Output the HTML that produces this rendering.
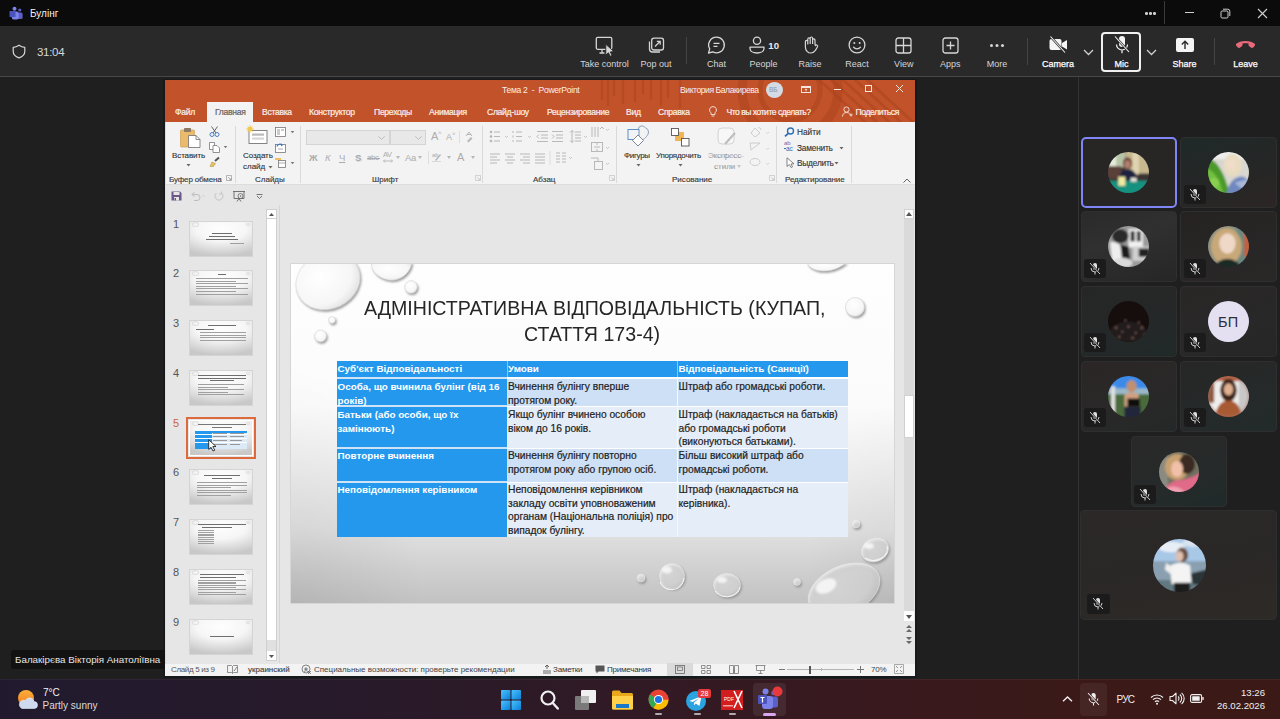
<!DOCTYPE html>
<html><head><meta charset="utf-8">
<style>
*{margin:0;padding:0;box-sizing:border-box}
html,body{width:1280px;height:719px;overflow:hidden;background:#1f1f1f;font-family:"Liberation Sans",sans-serif}
.a{position:absolute}
svg{position:absolute;overflow:visible}
.t{position:absolute;white-space:nowrap;line-height:1}
.lbl{position:absolute;top:59px;font-size:9px;line-height:11px;color:#d6d6d6;text-align:center;width:80px;margin-left:-40px;white-space:nowrap}
.lblb{color:#fff;-webkit-text-stroke:0.25px #fff}
/* ppt */
.tab{position:absolute;top:108px;font-size:8.6px;color:#fbefea;white-space:nowrap;line-height:9px;letter-spacing:-0.3px;-webkit-text-stroke:0.2px #fbefea}
.gl{position:absolute;top:175px;font-size:8px;color:#3a3a3a;white-space:nowrap;line-height:9px;-webkit-text-stroke:0.15px #3a3a3a}
.rl{position:absolute;font-size:8px;color:#333;white-space:nowrap;line-height:9px;-webkit-text-stroke:0.12px #333}
.gsep{position:absolute;top:126px;width:1px;height:57px;background:#dadada}
.snum{position:absolute;left:173px;font-size:11px;color:#555;line-height:11px}
.thumb{position:absolute;left:189px;width:64px;height:36px;border:1px solid #d4d4d4;background:radial-gradient(ellipse 90% 80% at 50% 20%,#fefefe 0%,#f6f6f6 45%,#d9d9d9 80%,#c8c8c8 100%);overflow:hidden}
.thumb i{position:absolute;display:block;height:1px;background:#9a9a9a;filter:blur(0.25px)}
</style></head><body>
<div class="a" style="left:0;top:0;width:1280px;height:26px;background:#0b0b0b"></div>
<div class="a" style="left:0;top:26px;width:1280px;height:50px;background:#292929"></div>
<div class="a" style="left:0;top:76px;width:1280px;height:1px;background:#474747"></div>
<div class="a" style="left:1078px;top:77px;width:1px;height:602px;background:#333"></div>
<!-- title bar -->
<svg class="a" style="left:9px;top:6px" width="15" height="15" viewBox="0 0 15 15">
<circle cx="5.5" cy="2.8" r="2" fill="#7b83eb"/><circle cx="10.8" cy="4" r="1.6" fill="#5b5fc7"/>
<rect x="8.6" y="6.4" width="5" height="6.5" rx="1.5" fill="#5b5fc7"/>
<rect x="2.8" y="5.6" width="7" height="8" rx="1.8" fill="#7b83eb"/>
<rect x="0.5" y="5" width="6" height="6" rx="0.6" fill="#4b53bc"/>
</svg>
<div class="t" style="left:30px;top:8.5px;font-size:10px;color:#f2f2f2">Булінг</div>
<div class="a" style="left:1145px;top:12px;width:2.5px;height:2.5px;border-radius:50%;background:#cfcfcf;box-shadow:4px 0 0 #cfcfcf,8px 0 0 #cfcfcf"></div>
<div class="a" style="left:1164px;top:1px;width:1px;height:23px;background:#3a3a3a"></div>
<div class="a" style="left:1185px;top:12px;width:9px;height:1px;background:#cfcfcf"></div>
<svg class="a" style="left:1220px;top:8px" width="11" height="11" viewBox="0 0 11 11"><rect x="1" y="3" width="7" height="7" rx="1.2" fill="none" stroke="#cfcfcf" stroke-width="1"/><path d="M3 1.2h4.8a2 2 0 0 1 2 2V8" fill="none" stroke="#cfcfcf" stroke-width="1"/></svg>
<svg class="a" style="left:1257px;top:8px" width="11" height="11" viewBox="0 0 11 11"><path d="M1 1L10 10M10 1L1 10" stroke="#d0d0d0" stroke-width="1.1"/></svg>

<!-- toolbar left -->
<svg class="a" style="left:12px;top:44px" width="14" height="15" viewBox="0 0 14 15"><path d="M7 1.2C5 2.6 3.2 3.2 1.2 3.3V7.3C1.2 10.6 3.4 12.7 7 13.9C10.6 12.7 12.8 10.6 12.8 7.3V3.3C10.8 3.2 9 2.6 7 1.2Z" fill="none" stroke="#d8d8d8" stroke-width="1.2" stroke-linejoin="round"/></svg>
<div class="t" style="left:37px;top:47px;font-size:11.5px;color:#d8d8d8;letter-spacing:-0.3px">31:04</div>

<!-- toolbar items -->
<svg class="a" style="left:595px;top:36px" width="20" height="20" viewBox="0 0 20 20"><rect x="1.3" y="1.3" width="15.5" height="12" rx="1.5" fill="none" stroke="#d6d6d6" stroke-width="1.3"/><path d="M4.5 17h5M7 13.5V17" stroke="#d6d6d6" stroke-width="1.3"/><path d="M10.8 8.3V19.2L13.4 16.7L15.3 20.3L17.1 19.4L15.3 15.9L18.9 15.6Z" fill="#d6d6d6" stroke="#292929" stroke-width="0.9" stroke-linejoin="round"/></svg>
<div class="lbl" style="left:604.5px">Take control</div>
<svg class="a" style="left:648px;top:37px" width="17" height="17" viewBox="0 0 17 17"><rect x="3.7" y="1.2" width="11.8" height="11.8" rx="2.2" fill="none" stroke="#d6d6d6" stroke-width="1.3"/><path d="M1.5 4.5v7.5a3 3 0 0 0 3 3h7.5" fill="none" stroke="#d6d6d6" stroke-width="1.3"/><path d="M7 9.5L12 4.5M8.8 4.3h3.4v3.4" fill="none" stroke="#d6d6d6" stroke-width="1.2"/></svg>
<div class="lbl" style="left:656px">Pop out</div>
<div class="a" style="left:686px;top:37px;width:1px;height:27px;background:#444"></div>
<svg class="a" style="left:707px;top:36px" width="19" height="18" viewBox="0 0 19 18"><path d="M9.5 1.2a7.8 7.8 0 1 1-3.6 14.7L1.5 17l1.2-4.1A7.8 7.8 0 0 1 9.5 1.2Z" fill="none" stroke="#d6d6d6" stroke-width="1.3" stroke-linejoin="round"/><path d="M6.5 7.3h6M6.5 10.3h4" stroke="#d6d6d6" stroke-width="1.3"/></svg>
<div class="lbl" style="left:716.5px">Chat</div>
<svg class="a" style="left:749px;top:36px" width="16" height="18" viewBox="0 0 16 18"><circle cx="8" cy="4.7" r="3.6" fill="none" stroke="#d6d6d6" stroke-width="1.3"/><path d="M1 11.2h14v1.3c0 2.7-3.2 4.5-7 4.5s-7-1.8-7-4.5Z" fill="none" stroke="#d6d6d6" stroke-width="1.3" stroke-linejoin="round"/></svg>
<div class="t" style="left:768.3px;top:41px;font-size:9.6px;font-weight:bold;color:#e8e8e8">10</div>
<div class="lbl" style="left:763.5px">People</div>
<svg class="a" style="left:802px;top:36px;transform:scaleX(-1)" width="17" height="18" viewBox="0 0 17 18"><path d="M4 9V4a1.2 1.2 0 0 1 2.4 0v4M6.4 8V2.2a1.2 1.2 0 0 1 2.4 0V8M8.8 8V3a1.2 1.2 0 0 1 2.4 0v5.5M11.2 8.5V5.5a1.2 1.2 0 0 1 2.4 0v5.5c0 3.5-2.5 6-5.5 6-2 0-3.3-1-4.5-2.6L1.5 10.7a1.2 1.2 0 0 1 2-1.3L4 10" fill="none" stroke="#d6d6d6" stroke-width="1.2" stroke-linejoin="round"/></svg>
<div class="lbl" style="left:810px">Raise</div>
<svg class="a" style="left:848px;top:36px" width="18" height="18" viewBox="0 0 18 18"><circle cx="9" cy="9" r="7.9" fill="none" stroke="#d6d6d6" stroke-width="1.3"/><circle cx="6.3" cy="7" r="1" fill="#d6d6d6"/><circle cx="11.7" cy="7" r="1" fill="#d6d6d6"/><path d="M5.5 11.2c1.8 2.2 5.2 2.2 7 0" fill="none" stroke="#d6d6d6" stroke-width="1.3" stroke-linecap="round"/></svg>
<div class="lbl" style="left:857px">React</div>
<svg class="a" style="left:895px;top:37px" width="17" height="17" viewBox="0 0 17 17"><rect x="1" y="1" width="15" height="15" rx="2.3" fill="none" stroke="#d6d6d6" stroke-width="1.3"/><path d="M8.5 1v15M1 8.5h15" stroke="#d6d6d6" stroke-width="1.3"/></svg>
<div class="lbl" style="left:903.75px">View</div>
<svg class="a" style="left:942px;top:37px" width="17" height="17" viewBox="0 0 17 17"><rect x="1" y="1" width="15" height="15" rx="2.3" fill="none" stroke="#d6d6d6" stroke-width="1.3"/><path d="M8.5 4.5v8M4.5 8.5h8" stroke="#d6d6d6" stroke-width="1.3"/></svg>
<div class="lbl" style="left:950.3px">Apps</div>
<div class="a" style="left:990px;top:44px;width:3px;height:3px;border-radius:50%;background:#d6d6d6;box-shadow:5.5px 0 0 #d6d6d6,11px 0 0 #d6d6d6"></div>
<div class="lbl" style="left:997px">More</div>
<div class="a" style="left:1027px;top:38px;width:1px;height:27px;background:#444"></div>
<svg class="a" style="left:1048px;top:35px" width="21" height="19" viewBox="0 0 21 19"><rect x="1.5" y="4" width="12" height="11" rx="2" fill="#f5f5f5"/><path d="M14 8l5-3v9.5l-5-3Z" fill="#f5f5f5"/><path d="M2.5 1.5L17 17.5" stroke="#292929" stroke-width="2.4"/><path d="M2.5 1.5L17 17.5" stroke="#f5f5f5" stroke-width="1.1"/></svg>
<div class="lbl lblb" style="left:1058px">Camera</div>
<svg class="a" style="left:1083px;top:49px" width="11" height="7" viewBox="0 0 11 7"><path d="M1 1l4.5 4.5L10 1" fill="none" stroke="#cfcfcf" stroke-width="1.3"/></svg>
<div class="a" style="left:1101px;top:32px;width:40px;height:40px;border:2px solid #f0f0f0;border-radius:4px"></div>
<svg class="a" style="left:1113px;top:35px" width="18" height="19" viewBox="0 0 18 19"><rect x="6" y="1" width="6" height="11" rx="3" fill="#f5f5f5"/><path d="M3.5 9.5a5.5 5.5 0 0 0 11 0M9 15v3.2" fill="none" stroke="#f5f5f5" stroke-width="1.2"/><path d="M2 1.5L16 17" stroke="#292929" stroke-width="2.4"/><path d="M2 1.5L16 17" stroke="#f5f5f5" stroke-width="1.1"/></svg>
<div class="lbl lblb" style="left:1121.6px">Mic</div>
<svg class="a" style="left:1146px;top:49px" width="11" height="7" viewBox="0 0 11 7"><path d="M1 1l4.5 4.5L10 1" fill="none" stroke="#cfcfcf" stroke-width="1.3"/></svg>
<svg class="a" style="left:1176px;top:38px" width="18" height="14" viewBox="0 0 18 14"><rect x="0" y="0" width="18" height="14" rx="2" fill="#f5f5f5"/><path d="M9 11V3.5M5.8 6.5L9 3.3l3.2 3.2" fill="none" stroke="#292929" stroke-width="1.4"/></svg>
<div class="lbl lblb" style="left:1184.5px">Share</div>
<div class="a" style="left:1214px;top:38px;width:1px;height:27px;background:#444"></div>
<svg class="a" style="left:1235px;top:40px" width="21" height="10" viewBox="0 0 21 10"><path d="M10.5 1C6.5 1 3 2.2 1.3 3.8c-.6.6-.5 1.4 0 2l1.5 1.8c.5.6 1.3.6 1.9.2l2.2-1.5c.5-.4.6-.9.6-1.5V3.6c1.9-.5 4.1-.5 6 0v1.2c0 .6.2 1.1.6 1.5l2.2 1.5c.6.4 1.4.4 1.9-.2l1.5-1.8c.5-.6.6-1.4 0-2C18 2.2 14.5 1 10.5 1Z" fill="#e8697a"/></svg>
<div class="lbl lblb" style="left:1245.5px">Leave</div>

<!-- PPT window -->
<div class="a" style="left:163px;top:79px;width:754px;height:599px;background:#161a1d"></div>
<div class="a" style="left:165px;top:80px;width:750px;height:596px;background:#e6e6e6"></div>
<div class="a" style="left:165px;top:80px;width:750px;height:42px;background:#c25229;overflow:hidden">
 <svg style="left:0;top:0" width="750" height="42" viewBox="0 0 750 42">
  <g fill="none" stroke="#a8421e" stroke-opacity="0.5">
   <path d="M437 0v20M443 0v26M449 0v16M458 0v24M470 0v22M478 0v14M486 0v20M496 0v26M503 0v18M515 0v28" stroke-width="2.2"/>
   <circle cx="625" cy="10" r="48" stroke-width="9"/><circle cx="625" cy="10" r="30" stroke-width="5"/>
   <path d="M650 -4L700 42M662 -4L712 42M674 -4L724 42M686 -4L736 42M698 -4L748 42" stroke-width="3"/>
  </g>
 </svg>
</div>
<div class="t" style="left:502px;top:86px;font-size:8.6px;color:#fbeee9;letter-spacing:-0.3px">Тема 2&nbsp;&nbsp;-&nbsp;&nbsp;PowerPoint</div>
<div class="t" style="left:680px;top:86px;font-size:8.6px;letter-spacing:-0.45px;color:#fbeee9">Виктория Балакирева</div>
<div class="a" style="left:766px;top:82px;width:17px;height:16px;border-radius:50%;background:#d4dbe4"></div>
<div class="t" style="left:769px;top:87px;font-size:6.5px;color:#8793a3">ВБ</div>
<svg style="left:801px;top:86px" width="10" height="7" viewBox="0 0 10 7"><rect x="0.5" y="0.5" width="9" height="6" fill="none" stroke="#f5e6e0" stroke-width="1"/><rect x="0.5" y="0.5" width="9" height="1.5" fill="#f5e6e0"/><path d="M5 5.5V3M3.8 4L5 2.8L6.2 4" stroke="#f5e6e0" stroke-width="0.8" fill="none"/></svg>
<div class="a" style="left:834px;top:89px;width:7px;height:1px;background:#f5e6e0"></div>
<div class="a" style="left:865px;top:85px;width:7px;height:7px;border:1px solid #f5e6e0"></div>
<svg style="left:896px;top:85px" width="7" height="7" viewBox="0 0 7 7"><path d="M0 0L7 7M7 0L0 7" stroke="#f5e6e0" stroke-width="1"/></svg>
<!-- tabs -->
<div class="a" style="left:207px;top:102px;width:46px;height:21px;background:#f3f3f3"></div>
<div class="tab" style="left:175px">Файл</div>
<div class="tab" style="left:215px;color:#6a605c;-webkit-text-stroke:0.2px #6a605c">Главная</div>
<div class="tab" style="left:262px">Вставка</div>
<div class="tab" style="left:309px">Конструктор</div>
<div class="tab" style="left:374px">Переходы</div>
<div class="tab" style="left:429px">Анимация</div>
<div class="tab" style="left:487px">Слайд-шоу</div>
<div class="tab" style="left:547px">Рецензирование</div>
<div class="tab" style="left:626px">Вид</div>
<div class="tab" style="left:658px">Справка</div>
<svg style="left:709px;top:106px" width="8" height="11" viewBox="0 0 8 11"><path d="M4 0.6a3.4 3.4 0 0 0-2 6.2V8.5h4V6.8a3.4 3.4 0 0 0-2-6.2ZM2.6 10h2.8" fill="none" stroke="#f5e6e0" stroke-width="0.9"/></svg>
<div class="tab" style="left:726.5px;letter-spacing:-0.5px">Что вы хотите сделать?</div>
<svg style="left:842px;top:106px" width="11" height="11" viewBox="0 0 11 11"><circle cx="4.5" cy="3.5" r="2.6" fill="none" stroke="#f5e6e0" stroke-width="0.9"/><path d="M0.5 10.5c0-2.5 1.8-4 4-4s3 1 3.5 2M7.5 9h3M9 7.5v3" fill="none" stroke="#f5e6e0" stroke-width="0.9"/></svg>
<div class="tab" style="left:855.5px;letter-spacing:-0.4px">Поделиться</div>
<!-- ribbon -->
<div class="a" style="left:165px;top:122px;width:750px;height:62px;background:#f3f3f3"></div>
<div class="a" style="left:165px;top:184px;width:750px;height:1px;background:#dcdcdc"></div>
<div class="gsep" style="left:235px"></div>
<div class="gsep" style="left:300px"></div>
<div class="gsep" style="left:482px"></div>
<div class="gsep" style="left:616px"></div>
<div class="gsep" style="left:776px"></div>
<div class="gsep" style="left:851px"></div>
<div class="gl" style="left:169px;letter-spacing:-0.15px">Буфер обмена</div>
<div class="gl" style="left:255px">Слайды</div>
<div class="gl" style="left:372px">Шрифт</div>
<div class="gl" style="left:533px">Абзац</div>
<div class="gl" style="left:672px">Рисование</div>
<div class="gl" style="left:785px;letter-spacing:-0.1px">Редактирование</div>
<!-- dialog launchers -->
<svg style="left:226px;top:175px" width="6" height="6" viewBox="0 0 6 6"><path d="M0.5 0.5h5v5h-5Z M2 2l3 3M3 5h2V3" fill="none" stroke="#999" stroke-width="0.7"/></svg>
<svg style="left:475px;top:175px" width="6" height="6" viewBox="0 0 6 6"><path d="M0.5 0.5h5v5h-5Z M2 2l3 3M3 5h2V3" fill="none" stroke="#c4c4c4" stroke-width="0.7"/></svg>
<svg style="left:609px;top:175px" width="6" height="6" viewBox="0 0 6 6"><path d="M0.5 0.5h5v5h-5Z M2 2l3 3M3 5h2V3" fill="none" stroke="#c4c4c4" stroke-width="0.7"/></svg>
<svg style="left:769px;top:175px" width="6" height="6" viewBox="0 0 6 6"><path d="M0.5 0.5h5v5h-5Z M2 2l3 3M3 5h2V3" fill="none" stroke="#c4c4c4" stroke-width="0.7"/></svg>
<svg style="left:903px;top:178px" width="8" height="5" viewBox="0 0 8 5"><path d="M0.5 4.5L4 1L7.5 4.5" fill="none" stroke="#666" stroke-width="1"/></svg>

<!-- clipboard -->
<svg style="left:180px;top:127px" width="21" height="21" viewBox="0 0 21 21">
 <rect x="0.5" y="3" width="14" height="17" rx="1" fill="#e9bb6a" stroke="#c9954a" stroke-width="0.6"/>
 <rect x="4" y="1" width="7" height="4" rx="0.8" fill="#8c7a66"/>
 <path d="M8.5 8.5h7.5l4 4v8h-11.5Z" fill="#fff" stroke="#6e6e6e" stroke-width="0.8"/>
 <path d="M16 8.5v4h4" fill="none" stroke="#6e6e6e" stroke-width="0.8"/>
</svg>
<div class="rl" style="left:172px;top:151px;letter-spacing:-0.1px">Вставить</div>
<svg style="left:186px;top:164px" width="5" height="3" viewBox="0 0 5 3"><path d="M0.5 0h4L2.5 2.5Z" fill="#666"/></svg>
<svg style="left:209px;top:126px" width="11" height="11" viewBox="0 0 11 11"><path d="M2.5 0.5L7 7M8.5 0.5L4 7" stroke="#555" stroke-width="0.9"/><circle cx="3" cy="8.5" r="2" fill="none" stroke="#4a7fc0" stroke-width="1"/><circle cx="8" cy="8.5" r="2" fill="none" stroke="#4a7fc0" stroke-width="1"/></svg>
<svg style="left:209px;top:142px" width="11" height="11" viewBox="0 0 11 11"><path d="M0.5 0.5h5v7h-5Z" fill="#fff" stroke="#777" stroke-width="0.8"/><path d="M4 3.5h4l2.5 2.5v4.5h-6.5Z" fill="#fff" stroke="#777" stroke-width="0.8"/></svg>
<svg style="left:223px;top:146px" width="5" height="3" viewBox="0 0 5 3"><path d="M0.7 0h3.6L2.5 2.2Z" fill="#777"/></svg>
<svg style="left:209px;top:157px" width="11" height="10" viewBox="0 0 11 10"><path d="M6 4L10 0.5" stroke="#555" stroke-width="2"/><path d="M1 9.5L3 5L6.5 6.5L4.5 9.5Z" fill="#e8c060" stroke="#a98a3a" stroke-width="0.5"/></svg>
<!-- slides -->
<svg style="left:246px;top:125px" width="22" height="20" viewBox="0 0 22 20">
 <rect x="3" y="5.5" width="18" height="13" fill="#fff" stroke="#777" stroke-width="0.9"/>
 <rect x="6" y="8.5" width="12" height="2.2" fill="#b9b9b9"/><rect x="6" y="12.5" width="12" height="2.2" fill="#d6d6d6"/>
 <circle cx="4" cy="4" r="2.6" fill="#f3c94e"/><path d="M4 0v8M0 4h8M1.2 1.2l5.6 5.6M6.8 1.2l-5.6 5.6" stroke="#f3c94e" stroke-width="0.6"/>
</svg>
<div class="rl" style="left:243px;top:151px;letter-spacing:-0.1px">Создать</div>
<div class="rl" style="left:243px;top:162px">слайд</div>
<svg style="left:267.5px;top:165.5px" width="5" height="3" viewBox="0 0 5 3"><path d="M0.5 0h4L2.5 2.5Z" fill="#666"/></svg>
<svg style="left:275px;top:127px" width="11" height="10" viewBox="0 0 11 10"><rect x="0.5" y="0.5" width="10" height="9" fill="#fff" stroke="#777" stroke-width="0.8"/><rect x="2" y="2" width="3" height="6" fill="#ccc"/><rect x="6" y="2" width="3" height="2" fill="#ccc"/></svg>
<svg style="left:290px;top:131px" width="5" height="3" viewBox="0 0 5 3"><path d="M0.7 0h3.6L2.5 2.2Z" fill="#777"/></svg>
<svg style="left:275px;top:142px" width="11" height="11" viewBox="0 0 11 11"><rect x="0.5" y="2.5" width="10" height="8" fill="#fff" stroke="#777" stroke-width="0.8"/><path d="M2 4.5a3 3 0 0 1 5-1.5" fill="none" stroke="#3a78c0" stroke-width="1.2"/><path d="M6 1.5l2 1.5-2 1.5Z" fill="#3a78c0"/><rect x="3" y="6.5" width="5" height="1" fill="#aaa"/></svg>
<svg style="left:275px;top:158px" width="11" height="10" viewBox="0 0 11 10"><rect x="3.5" y="2.5" width="7" height="7" fill="#fff" stroke="#777" stroke-width="0.8"/><rect x="0" y="0" width="6" height="2" fill="#f0c060"/><path d="M3.5 5h7" stroke="#999" stroke-width="0.8"/></svg>
<svg style="left:290px;top:162px" width="5" height="3" viewBox="0 0 5 3"><path d="M0.7 0h3.6L2.5 2.2Z" fill="#777"/></svg>
<!-- font group -->
<div class="a" style="left:306px;top:130px;width:84px;height:15px;background:#e8e8e8;border:1px solid #d4d4d4"></div>
<div class="a" style="left:390px;top:130px;width:36px;height:15px;background:#e8e8e8;border:1px solid #d4d4d4"></div>
<svg style="left:378px;top:136px" width="7" height="4" viewBox="0 0 7 4"><path d="M0.3 0.3L3.5 3.5L6.7 0.3" fill="none" stroke="#b4b4b4" stroke-width="0.8"/></svg>
<svg style="left:415px;top:136px" width="7" height="4" viewBox="0 0 7 4"><path d="M0.3 0.3L3.5 3.5L6.7 0.3" fill="none" stroke="#b4b4b4" stroke-width="0.8"/></svg>
<div class="t" style="left:431px;top:131px;font-size:11px;color:#acacac">A</div><div class="t" style="left:438px;top:130px;font-size:6px;color:#acacac">˄</div>
<div class="t" style="left:446px;top:133px;font-size:9px;color:#acacac">A</div><div class="t" style="left:452px;top:131px;font-size:6px;color:#acacac">˅</div>
<div class="a" style="left:459px;top:131px;width:1px;height:12px;background:#dedede"></div>
<svg style="left:465px;top:131px" width="8" height="11" viewBox="0 0 8 11"><path d="M1 5L4 1L7 5M2 3.5h4" fill="none" stroke="#b0b0b0" stroke-width="0.9"/><path d="M2 10L6 6l1.5 1.5-4 4" fill="#b8b8b8"/></svg>
<div class="t" style="left:309px;top:153px;font-size:9.5px;font-weight:bold;color:#acacac">Ж</div>
<div class="t" style="left:325px;top:153px;font-size:9.5px;font-style:italic;color:#acacac">К</div>
<div class="t" style="left:339px;top:153px;font-size:9.5px;text-decoration:underline;color:#acacac">Ч</div>
<div class="t" style="left:356px;top:154px;font-size:9.5px;color:#d8d8d8">S</div><div class="t" style="left:355px;top:153px;font-size:9.5px;color:#a8a8a8;font-weight:bold">S</div>
<div class="t" style="left:367px;top:154px;font-size:8px;color:#acacac;letter-spacing:-0.4px">abc</div><div class="a" style="left:367px;top:158px;width:13px;height:1px;background:#acacac"></div>
<div class="t" style="left:383px;top:151px;font-size:7.5px;color:#acacac;letter-spacing:-0.5px">AV</div>
<svg style="left:383px;top:159px" width="10" height="4" viewBox="0 0 10 4"><path d="M0.5 2h9M2 0.5L0.5 2L2 3.5M8 0.5L9.5 2L8 3.5" fill="none" stroke="#acacac" stroke-width="0.8"/></svg>
<svg style="left:396px;top:156px" width="4" height="3" viewBox="0 0 4 3"><path d="M0 0h4L2 3Z" fill="#b8b8b8"/></svg>
<div class="t" style="left:405px;top:153px;font-size:9.5px;color:#acacac;letter-spacing:-0.3px">Aa</div>
<svg style="left:418px;top:156px" width="4" height="3" viewBox="0 0 4 3"><path d="M0 0h4L2 3Z" fill="#b8b8b8"/></svg>
<div class="a" style="left:428px;top:151px;width:1px;height:13px;background:#dedede"></div>
<svg style="left:432px;top:151px" width="10" height="11" viewBox="0 0 10 11"><text x="0" y="6" font-size="6" fill="#acacac" font-family="Liberation Sans">ab</text><path d="M3 9L8 3l1 1-5 6Z" fill="#b4b4b4"/><rect x="0" y="10" width="9" height="1" fill="#d8d8d8"/></svg>
<svg style="left:447px;top:156px" width="4" height="3" viewBox="0 0 4 3"><path d="M0 0h4L2 3Z" fill="#b8b8b8"/></svg>
<div class="t" style="left:457px;top:152px;font-size:11px;color:#acacac">A</div>
<svg style="left:471px;top:156px" width="4" height="3" viewBox="0 0 4 3"><path d="M0 0h4L2 3Z" fill="#b8b8b8"/></svg>
<!-- paragraph group -->
<svg style="left:489px;top:130px" width="125" height="42" viewBox="0 0 125 42" fill="none" stroke="#b2b2b2" stroke-width="0.9">
 <circle cx="2" cy="2" r="0.9" fill="#b2b2b2"/><circle cx="2" cy="6.5" r="0.9" fill="#b2b2b2"/><circle cx="2" cy="11" r="0.9" fill="#b2b2b2"/>
 <path d="M5 2h6M5 6.5h6M5 11h6"/><path d="M16 6l1.5 1.5L19 6" stroke-width="0.7"/>
 <path d="M24 1v2M24 5.5v2M24 10v2M27 2h6M27 6.5h6M27 11h6"/><path d="M39 6l1.5 1.5L42 6" stroke-width="0.7"/>
 <path d="M48 1.5h11M52 5h7M52 8h7M48 11.5h11M50 4.5L48 6.5L50 8.5"/>
 <path d="M63 1.5h11M67 5h7M67 8h7M63 11.5h11M63 4.5L65 6.5L63 8.5"/>
 <path d="M83 0.5v12M81 2.5l2-2 2 2M81 10.5l2 2 2-2M86 2h6M86 5h6M86 8h6M86 11h6"/><path d="M95 6l1.5 1.5L98 6" stroke-width="0.7"/>
 <path d="M103 -3v10M106 -3v10M109 -3v10M111 -1l2-2 2 2"/><path d="M117 -1l1.5 1.5L120 -1" stroke-width="0.7"/>
 <path d="M1 24h10M1 27h7M1 30h10M1 33h7"/>
 <path d="M16 24h10M18 27h6M16 30h10M18 33h6"/>
 <path d="M31 24h10M34 27h7M31 30h10M34 33h7"/>
 <path d="M46 24h10M46 27h10M46 30h10M46 33h10"/>
 <path d="M61 21v14" stroke="#dadada"/>
 <path d="M67 23h4M67 26h4M67 29h4M67 32h4M73 23h4M73 26h4M73 29h4M73 32h4"/><path d="M80 27l1.5 1.5L83 27" stroke-width="0.7"/>
 <rect x="102.5" y="12.5" width="11" height="9"/><path d="M105 17h6M108 13v2M108 19v2"/><path d="M117 17l1.5 1.5L120 17" stroke-width="0.7"/>
 <rect x="105.5" y="31.5" width="8" height="8"/><path d="M102 28h7v3" /><path d="M117 33l1.5 1.5L120 33" stroke-width="0.7"/>
</svg>
<!-- drawing group -->
<svg style="left:627px;top:126px" width="22" height="22" viewBox="0 0 22 22" fill="none" stroke-width="1">
 <rect x="1" y="3.5" width="11" height="10" stroke="#5e8fc5"/>
 <path d="M11 3.5a4 4 0 0 1 7.5-1.5a4 4 0 0 1 3 4c0 3-3 6-6 8" stroke="#8aa0b8"/>
 <path d="M11 9l5.5 5.5L11 20l-5.5-5.5Z" fill="#fff" stroke="#7a8a9a"/>
</svg>
<div class="rl" style="left:624px;top:151px;letter-spacing:-0.3px">Фигуры</div>
<svg style="left:636px;top:164px" width="5" height="3" viewBox="0 0 5 3"><path d="M0.5 0h4L2.5 2.5Z" fill="#666"/></svg>
<svg style="left:671px;top:128px" width="19" height="19" viewBox="0 0 19 19">
 <rect x="4" y="4" width="9" height="9" fill="#f0b452"/><rect x="0.5" y="0.5" width="7" height="7" fill="#fff" stroke="#555" stroke-width="0.9"/><rect x="10.5" y="10.5" width="7.5" height="7.5" fill="#fff" stroke="#555" stroke-width="0.9"/>
</svg>
<div class="rl" style="left:656px;top:151px;letter-spacing:-0.25px">Упорядочить</div>
<svg style="left:678px;top:164px" width="5" height="3" viewBox="0 0 5 3"><path d="M0.5 0h4L2.5 2.5Z" fill="#666"/></svg>
<svg style="left:717px;top:127px" width="21" height="20" viewBox="0 0 21 20"><rect x="1" y="1" width="16" height="16" rx="4" fill="#f7f7f7" stroke="#d2d2d2" stroke-width="1"/><path d="M18 6L8 17" stroke="#bdbdbd" stroke-width="2.2"/></svg>
<div class="rl" style="left:708px;top:151px;color:#c4c4c4;letter-spacing:-0.2px">Экспресс-</div>
<div class="rl" style="left:714px;top:162px;color:#c4c4c4">стили</div>
<svg style="left:737px;top:165px" width="4" height="3" viewBox="0 0 4 3"><path d="M0 0h4L2 3Z" fill="#c8c8c8"/></svg>
<svg style="left:749px;top:125px" width="20" height="45" viewBox="0 0 20 45" fill="none" stroke="#c8c8c8" stroke-width="0.9">
 <path d="M2 8L6 3L11 8L6 12Z"/><path d="M9 3a2 2 0 0 1 3 2" /><path d="M17 7l1.5 1.5L20 7" stroke-width="0.7"/>
 <path d="M1 18h10l-9 7Z"/><path d="M17 23l1.5 1.5L20 23" stroke-width="0.7"/>
 <ellipse cx="6" cy="37" rx="5" ry="3.5"/><path d="M17 38l1.5 1.5L20 38" stroke-width="0.7"/>
</svg>
<!-- editing group -->
<svg style="left:784px;top:127px" width="11" height="10" viewBox="0 0 11 10"><circle cx="6.5" cy="4" r="3" fill="none" stroke="#2d6fb6" stroke-width="1.4"/><path d="M4.3 6.3L1 9.3" stroke="#2d6fb6" stroke-width="1.8"/></svg>
<div class="rl" style="left:797px;top:128px;font-size:8.3px">Найти</div>
<div class="t" style="left:784px;top:140px;font-size:6px;color:#8b5e9a;line-height:6px">ab</div>
<div class="t" style="left:786px;top:146px;font-size:6.5px;color:#2d6fb6;line-height:6px">ac</div>
<div class="a" style="left:784px;top:148px;width:2px;height:1px;background:#2d6fb6"></div>
<div class="rl" style="left:797px;top:144px;font-size:8.3px;letter-spacing:-0.2px">Заменить</div>
<svg style="left:839px;top:147px" width="5" height="3" viewBox="0 0 5 3"><path d="M0.5 0h4L2.5 2.5Z" fill="#666"/></svg>
<svg style="left:786px;top:157px" width="9" height="11" viewBox="0 0 9 11"><path d="M1 0.8V9.5L3.3 7.5L5 10.5L6.5 9.8L5 7L8 6.8Z" fill="#fff" stroke="#666" stroke-width="0.8" stroke-linejoin="round"/></svg>
<div class="rl" style="left:797px;top:159px;font-size:8.3px;letter-spacing:-0.2px">Выделить</div>
<svg style="left:834px;top:162px" width="5" height="3" viewBox="0 0 5 3"><path d="M0.5 0h4L2.5 2.5Z" fill="#666"/></svg>

<!-- QAT -->
<svg style="left:171px;top:191px" width="11" height="10" viewBox="0 0 11 10"><path d="M0.5 0.5h8.5l1.5 1.5v7.5h-10Z" fill="#6b5888"/><rect x="2.5" y="1" width="6" height="3" fill="#e6e6e6"/><rect x="3" y="6" width="5" height="3.5" fill="#e6e6e6"/><rect x="3.5" y="7" width="1.5" height="2.5" fill="#6b5888"/></svg>
<svg style="left:190px;top:191px" width="16" height="10" viewBox="0 0 16 10"><path d="M2 3.5h5a3 3 0 0 1 0 6H4M4.5 1L2 3.5L4.5 6" fill="none" stroke="#bdbdbd" stroke-width="1"/><path d="M12 4l1.5 1.5L15 4" fill="none" stroke="#c8c8c8" stroke-width="0.7"/></svg>
<svg style="left:214px;top:191px" width="10" height="10" viewBox="0 0 10 10"><path d="M7.5 2a4 4 0 1 1-5 0M7.5 0.5v2.5H5" fill="none" stroke="#c4c4c4" stroke-width="1"/></svg>
<svg style="left:233px;top:191px" width="12" height="11" viewBox="0 0 12 11"><path d="M0 0.5h12M1 0.5v7h10v-7M4 10.5l2-3 2 3" fill="none" stroke="#666" stroke-width="0.9"/><circle cx="7.5" cy="5" r="2.5" fill="none" stroke="#666" stroke-width="0.8"/><path d="M7 4v2l1.5-1Z" fill="#666"/></svg>
<svg style="left:256px;top:194px" width="7" height="5" viewBox="0 0 7 5"><path d="M0.5 0.5h6M1 2l2.5 2.5L6 2" fill="none" stroke="#666" stroke-width="0.9"/></svg>
<!-- left panel separator & scroll -->
<div class="a" style="left:279px;top:205px;width:1px;height:458px;background:#d6d6d6"></div>
<div class="a" style="left:266px;top:209px;width:11px;height:452px;background:#e0e0e0;border:1px solid #cfcfcf"></div>
<div class="a" style="left:267px;top:219px;width:9px;height:421px;background:#fff"></div>
<div class="a" style="left:267px;top:210px;width:9px;height:9px;background:#fff;border-bottom:1px solid #cfcfcf"></div>
<svg style="left:269px;top:213px" width="5" height="3" viewBox="0 0 5 3"><path d="M0 3h5L2.5 0Z" fill="#555"/></svg>
<div class="a" style="left:267px;top:651px;width:9px;height:9px;background:#fff"></div>
<svg style="left:269px;top:655px" width="5" height="3" viewBox="0 0 5 3"><path d="M0 0h5L2.5 3Z" fill="#555"/></svg>
<!-- thumbnails -->
<div class="snum" style="top:219px;color:#555">1</div>
<div class="thumb" style="top:221px;border-color:#d4d4d4"><i style="left:2px;top:0;width:7px;height:5px;border-radius:50%;background:transparent;border:0.5px solid #dedede"></i><i style="left:56px;top:1px;width:4px;height:3px;border-radius:50%;background:transparent;border:0.5px solid #dedede"></i><i style="left:22px;top:11px;width:20px;height:1.3px;background:#6e6e6e"></i><i style="left:19px;top:14px;width:26px;height:1.3px;background:#6e6e6e"></i><i style="left:16px;top:17px;width:32px;height:1.3px;background:#6e6e6e"></i><i style="left:40px;top:21px;width:14px;height:1.3px;background:#a0a0a0"></i></div>
<div class="snum" style="top:268px;color:#555">2</div>
<div class="thumb" style="top:270px;border-color:#d4d4d4"><i style="left:2px;top:0;width:7px;height:5px;border-radius:50%;background:transparent;border:0.5px solid #dedede"></i><i style="left:56px;top:1px;width:4px;height:3px;border-radius:50%;background:transparent;border:0.5px solid #dedede"></i><i style="left:28px;top:3px;width:8px;height:1.2px;background:#6e6e6e"></i><i style="left:6px;top:7.0px;width:52px;height:1.1px;background:#a0a0a0"></i><i style="left:6px;top:9.6px;width:40px;height:1.1px;background:#a0a0a0"></i><i style="left:6px;top:12.2px;width:52px;height:1.1px;background:#a0a0a0"></i><i style="left:6px;top:14.8px;width:40px;height:1.1px;background:#a0a0a0"></i><i style="left:6px;top:17.4px;width:52px;height:1.1px;background:#a0a0a0"></i><i style="left:6px;top:20.0px;width:40px;height:1.1px;background:#a0a0a0"></i><i style="left:6px;top:22.6px;width:52px;height:1.1px;background:#a0a0a0"></i></div>
<div class="snum" style="top:318px;color:#555">3</div>
<div class="thumb" style="top:320px;border-color:#d4d4d4"><i style="left:2px;top:0;width:7px;height:5px;border-radius:50%;background:transparent;border:0.5px solid #dedede"></i><i style="left:56px;top:1px;width:4px;height:3px;border-radius:50%;background:transparent;border:0.5px solid #dedede"></i><i style="left:18px;top:4px;width:28px;height:1.1px;background:#6e6e6e"></i><i style="left:6px;top:8px;width:18px;height:1.1px;background:#6e6e6e"></i><i style="left:10px;top:11.0px;width:46px;height:1.3px;background:#a0a0a0"></i><i style="left:10px;top:13.5px;width:46px;height:1.3px;background:#a0a0a0"></i><i style="left:10px;top:16.0px;width:46px;height:1.3px;background:#a0a0a0"></i><i style="left:10px;top:18.5px;width:46px;height:1.3px;background:#a0a0a0"></i></div>
<div class="snum" style="top:368px;color:#555">4</div>
<div class="thumb" style="top:370px;border-color:#d4d4d4"><i style="left:2px;top:0;width:7px;height:5px;border-radius:50%;background:transparent;border:0.5px solid #dedede"></i><i style="left:56px;top:1px;width:4px;height:3px;border-radius:50%;background:transparent;border:0.5px solid #dedede"></i><i style="left:8px;top:4px;width:48px;height:1.2px;background:#6e6e6e"></i><i style="left:8px;top:6.5px;width:48px;height:1.2px;background:#6e6e6e"></i><i style="left:20px;top:9px;width:24px;height:1.2px;background:#6e6e6e"></i><i style="left:8px;top:13.0px;width:46px;height:1.3px;background:#a0a0a0"></i><i style="left:8px;top:15.5px;width:30px;height:1.3px;background:#a0a0a0"></i><i style="left:8px;top:18.0px;width:46px;height:1.3px;background:#a0a0a0"></i><i style="left:8px;top:20.5px;width:30px;height:1.3px;background:#a0a0a0"></i><i style="left:8px;top:23.0px;width:46px;height:1.3px;background:#a0a0a0"></i></div>
<div class="snum" style="top:418px;color:#c8643c">5</div>
<div class="a" style="left:186px;top:417px;width:70px;height:42px;border:2.5px solid #dc6a3c"></div>
<div class="thumb" style="top:420px;border-color:#fff"><i style="left:2px;top:0;width:7px;height:5px;border-radius:50%;background:transparent;border:0.5px solid #dedede"></i><i style="left:56px;top:1px;width:4px;height:3px;border-radius:50%;background:transparent;border:0.5px solid #dedede"></i><i style="left:8px;top:3px;width:48px;height:1.2px;background:#777"></i><i style="left:22px;top:5.5px;width:20px;height:1.2px;background:#777"></i><i style="left:4.7px;top:10px;width:52.6px;height:18px;background:#dce9f7"></i><i style="left:4.7px;top:10px;width:52.6px;height:1.6px;background:#2398ec"></i><i style="left:4.7px;top:10px;width:17.5px;height:18px;background:#2398ec"></i><i style="left:4.7px;top:13px;width:52.6px;height:0.6px;background:#fff"></i><i style="left:4.7px;top:17px;width:52.6px;height:0.6px;background:#fff"></i><i style="left:4.7px;top:20.5px;width:52.6px;height:0.6px;background:#fff"></i><i style="left:23px;top:12px;width:14px;height:0.8px;background:#999"></i><i style="left:40px;top:12px;width:14px;height:0.8px;background:#999"></i><i style="left:23px;top:15px;width:14px;height:0.8px;background:#999"></i><i style="left:40px;top:15px;width:14px;height:0.8px;background:#999"></i><i style="left:23px;top:19px;width:14px;height:0.8px;background:#999"></i><i style="left:40px;top:19px;width:12px;height:0.8px;background:#999"></i><i style="left:23px;top:22.5px;width:14px;height:0.8px;background:#999"></i><i style="left:40px;top:22.5px;width:10px;height:0.8px;background:#999"></i></div>
<div class="snum" style="top:467px;color:#555">6</div>
<div class="thumb" style="top:469px;border-color:#d4d4d4"><i style="left:2px;top:0;width:7px;height:5px;border-radius:50%;background:transparent;border:0.5px solid #dedede"></i><i style="left:56px;top:1px;width:4px;height:3px;border-radius:50%;background:transparent;border:0.5px solid #dedede"></i><i style="left:14px;top:5px;width:36px;height:1.1px;background:#6e6e6e"></i><i style="left:22px;top:7.5px;width:20px;height:1.1px;background:#6e6e6e"></i><i style="left:7px;top:12.0px;width:50px;height:1.3px;background:#a0a0a0"></i><i style="left:7px;top:14.5px;width:50px;height:1.3px;background:#a0a0a0"></i><i style="left:7px;top:17.0px;width:34px;height:1.3px;background:#a0a0a0"></i><i style="left:7px;top:19.5px;width:50px;height:1.3px;background:#a0a0a0"></i><i style="left:7px;top:22.0px;width:50px;height:1.3px;background:#a0a0a0"></i><i style="left:7px;top:24.5px;width:34px;height:1.3px;background:#a0a0a0"></i></div>
<div class="snum" style="top:517px;color:#555">7</div>
<div class="thumb" style="top:519px;border-color:#d4d4d4"><i style="left:2px;top:0;width:7px;height:5px;border-radius:50%;background:transparent;border:0.5px solid #dedede"></i><i style="left:56px;top:1px;width:4px;height:3px;border-radius:50%;background:transparent;border:0.5px solid #dedede"></i><i style="left:8px;top:4px;width:48px;height:1.1px;background:#6e6e6e"></i><i style="left:12px;top:6.5px;width:30px;height:1.1px;background:#6e6e6e"></i><i style="left:8px;top:10.0px;width:16px;height:1.3px;background:#a0a0a0"></i><i style="left:8px;top:12.2px;width:16px;height:1.3px;background:#a0a0a0"></i><i style="left:8px;top:14.4px;width:16px;height:1.3px;background:#a0a0a0"></i><i style="left:8px;top:16.6px;width:16px;height:1.3px;background:#a0a0a0"></i><i style="left:8px;top:18.8px;width:16px;height:1.3px;background:#a0a0a0"></i><i style="left:8px;top:21.0px;width:16px;height:1.3px;background:#a0a0a0"></i><i style="left:8px;top:23.200000000000003px;width:16px;height:1.3px;background:#a0a0a0"></i></div>
<div class="snum" style="top:567px;color:#555">8</div>
<div class="thumb" style="top:569px;border-color:#d4d4d4"><i style="left:2px;top:0;width:7px;height:5px;border-radius:50%;background:transparent;border:0.5px solid #dedede"></i><i style="left:56px;top:1px;width:4px;height:3px;border-radius:50%;background:transparent;border:0.5px solid #dedede"></i><i style="left:10px;top:4px;width:44px;height:1.1px;background:#6e6e6e"></i><i style="left:10px;top:6.5px;width:36px;height:1.1px;background:#6e6e6e"></i><i style="left:8px;top:10.0px;width:48px;height:1.3px;background:#a0a0a0"></i><i style="left:8px;top:12.3px;width:38px;height:1.3px;background:#a0a0a0"></i><i style="left:8px;top:14.6px;width:48px;height:1.3px;background:#a0a0a0"></i><i style="left:8px;top:16.9px;width:38px;height:1.3px;background:#a0a0a0"></i><i style="left:8px;top:19.2px;width:48px;height:1.3px;background:#a0a0a0"></i><i style="left:8px;top:21.5px;width:38px;height:1.3px;background:#a0a0a0"></i><i style="left:8px;top:23.799999999999997px;width:48px;height:1.3px;background:#a0a0a0"></i></div>
<div class="snum" style="top:617px;color:#555">9</div>
<div class="thumb" style="top:619px;border-color:#d4d4d4"><i style="left:2px;top:0;width:7px;height:5px;border-radius:50%;background:transparent;border:0.5px solid #dedede"></i><i style="left:56px;top:1px;width:4px;height:3px;border-radius:50%;background:transparent;border:0.5px solid #dedede"></i><i style="left:20px;top:16px;width:24px;height:1.4px;background:#6e6e6e"></i></div>
<svg style="left:207.5px;top:439px" width="9" height="13" viewBox="0 0 9 13"><path d="M0.7 0.7V10.5L3 8.3L5 12L6.8 11.2L4.8 7.6L8 7.5Z" fill="#fff" stroke="#222" stroke-width="0.9" stroke-linejoin="round"/></svg>
<!-- right scrollbar -->
<div class="a" style="left:904px;top:209px;width:10px;height:412px;background:#dadada"></div>
<div class="a" style="left:904px;top:209px;width:10px;height:10px;background:#fff;border:1px solid #d0d0d0"></div>
<svg style="left:906px;top:212px" width="6" height="4" viewBox="0 0 6 4"><path d="M0 4h6L3 0Z" fill="#555"/></svg>
<div class="a" style="left:904px;top:395px;width:10px;height:43px;background:#fff;border:1px solid #d0d0d0"></div>
<div class="a" style="left:904px;top:611px;width:10px;height:10px;background:#fff"></div>
<svg style="left:906px;top:615px" width="6" height="4" viewBox="0 0 6 4"><path d="M0 0h6L3 4Z" fill="#555"/></svg>
<svg style="left:906px;top:625px" width="6" height="8" viewBox="0 0 6 8"><path d="M0 3h6L3 0ZM0 7h6L3 4Z" fill="#666"/></svg>
<svg style="left:906px;top:637px" width="6" height="8" viewBox="0 0 6 8"><path d="M0 0h6L3 3ZM0 4h6L3 7Z" fill="#666"/></svg>
<!-- status bar -->
<div class="a" style="left:165px;top:664px;width:750px;height:12px;background:#f3f3f3"></div><div class="a" style="left:165px;top:122px;width:1px;height:542px;background:#ead6cf"></div>
<div class="t" style="left:171px;top:665.5px;font-size:8px;color:#555;letter-spacing:-0.35px">Слайд 5 из 9</div>
<svg style="left:227px;top:665px" width="11" height="9" viewBox="0 0 11 9"><path d="M0.5 0.5h4l1 1v7l-1-1h-4Z M5.5 1.5l1-1h4v7h-4l-1 1" fill="none" stroke="#777" stroke-width="0.8"/><path d="M7 6l3-4" stroke="#777" stroke-width="0.9"/></svg>
<div class="t" style="left:248px;top:665.5px;font-size:8px;color:#444;-webkit-text-stroke:0.15px #444">украинский</div>
<svg style="left:301px;top:664px" width="11" height="11" viewBox="0 0 11 11"><circle cx="5" cy="5" r="4" fill="none" stroke="#666" stroke-width="0.8"/><path d="M3 5h4M5 3v2l-1.5 3M5 5l1.5 3M7 7l3 3M10 7l-3 3" fill="none" stroke="#555" stroke-width="0.7"/></svg>
<div class="t" style="left:314px;top:665.5px;font-size:8px;color:#444;letter-spacing:0px">Специальные возможности: проверьте рекомендации</div>
<svg style="left:542px;top:665px" width="10" height="9" viewBox="0 0 10 9"><path d="M5 0v4M3 2l2-2 2 2M1 6h8M1 8h8" fill="none" stroke="#555" stroke-width="0.9"/></svg>
<div class="t" style="left:553px;top:665.5px;font-size:8px;color:#333;letter-spacing:-0.2px">Заметки</div>
<svg style="left:595px;top:665px" width="10" height="9" viewBox="0 0 10 9"><path d="M0.5 0.5h9v6h-6l-2 2v-2h-1Z" fill="#555"/></svg>
<div class="t" style="left:607px;top:665.5px;font-size:8px;color:#333;letter-spacing:-0.2px">Примечания</div>
<div class="a" style="left:667px;top:663px;width:26px;height:13px;background:#dadada"></div>
<svg style="left:675px;top:665px" width="10" height="9" viewBox="0 0 10 9"><rect x="0.5" y="0.5" width="9" height="8" fill="none" stroke="#666" stroke-width="0.8"/><rect x="2.5" y="2" width="5" height="3.5" fill="none" stroke="#666" stroke-width="0.7"/></svg>
<svg style="left:701px;top:665px" width="10" height="9" viewBox="0 0 10 9"><path d="M0.5 0.5h3.5v3h-3.5ZM6 0.5h3.5v3h-3.5ZM0.5 5.5h3.5v3h-3.5ZM6 5.5h3.5v3h-3.5Z" fill="none" stroke="#777" stroke-width="0.8"/></svg>
<svg style="left:729px;top:665px" width="10" height="9" viewBox="0 0 10 9"><path d="M0.5 0.5h4v8h-4ZM5.5 0.5h4v8h-4Z" fill="none" stroke="#777" stroke-width="0.8"/><path d="M5 4v5" stroke="#777"/></svg>
<svg style="left:755px;top:665px" width="11" height="9" viewBox="0 0 11 9"><path d="M0.5 0.5h10M1.5 0.5v5h8v-5M5.5 5.5v3M3.5 8.5h4" fill="none" stroke="#777" stroke-width="0.8"/></svg>
<div class="a" style="left:779px;top:669px;width:6px;height:1.2px;background:#777"></div>
<div class="a" style="left:787px;top:669px;width:67px;height:1px;background:#b4b4b4"></div><div class="a" style="left:821px;top:667.5px;width:1px;height:3px;background:#b4b4b4"></div>
<div class="a" style="left:809px;top:665.5px;width:2px;height:8px;background:#555"></div>
<svg style="left:857px;top:666px" width="7" height="7" viewBox="0 0 7 7"><path d="M0 3.5h7M3.5 0v7" stroke="#777" stroke-width="1"/></svg>
<div class="t" style="left:871px;top:665.5px;font-size:8px;color:#444;letter-spacing:-0.2px">70%</div>
<svg style="left:894px;top:664px" width="10" height="10" viewBox="0 0 10 10"><path d="M0.5 0.5h9v9h-9Z" fill="none" stroke="#888" stroke-width="0.7"/><path d="M2 2l2 2M8 2l-2 2M2 8l2-2M8 8l-2-2" stroke="#777" stroke-width="0.8"/></svg>

<!-- main slide -->
<div class="a" style="left:290px;top:263px;width:605px;height:341px;background:#d6d6d6"></div>
<div class="a" style="left:291px;top:264px;width:603px;height:339px;overflow:hidden;background:radial-gradient(ellipse 22% 70% at 0% 100%,rgba(0,0,0,0.07) 0%,rgba(0,0,0,0) 100%),radial-gradient(ellipse 15% 60% at 100% 100%,rgba(0,0,0,0.05) 0%,rgba(0,0,0,0) 100%),linear-gradient(180deg,#fefefe 0%,#fbfbfb 42%,#efefef 60%,#e2e2e2 78%,#d0d0d0 90%,#c2c2c2 100%)">
 <svg style="left:0;top:0" width="603" height="339" viewBox="0 0 603 339">
  <defs>
   <radialGradient id="dg" cx="42%" cy="38%" r="65%"><stop offset="0" stop-color="#ffffff"/><stop offset="0.75" stop-color="#f6f6f6"/><stop offset="1" stop-color="#e2e2e2"/></radialGradient>
   <filter id="bl" x="-30%" y="-30%" width="160%" height="160%"><feGaussianBlur stdDeviation="0.9"/></filter>
  </defs>
  <g transform="translate(1.3 1.8)" fill="#8a8a8a" filter="url(#bl)" opacity="0.85"><ellipse cx="37" cy="17" rx="33" ry="28" transform="rotate(-25 37 17)" /><path d="M81 -2 C 78 8, 92 18, 104 16 C 114 14, 120 6, 121 -2 Z" /><circle cx="120" cy="23" r="6.3" /><circle cx="41" cy="56" r="3.4" /><circle cx="29.5" cy="72" r="6" /><path d="M516 -2 C 518 8, 540 12, 556 -2 Z" /><circle cx="564" cy="43" r="9.5" /><circle cx="565" cy="260" r="4" /><ellipse cx="584" cy="286" rx="14" ry="11.5" transform="rotate(-25 584 286)" /><ellipse cx="553" cy="326" rx="38" ry="24" transform="rotate(-25 553 326)" /><circle cx="506" cy="318" r="3.5" /><circle cx="381" cy="312" r="12.5" /><ellipse cx="436" cy="321" rx="13.5" ry="11.5" /><circle cx="350" cy="314" r="4" /></g>
  <g fill="url(#dg)" stroke="#d2d2d2" stroke-width="0.6"><ellipse cx="37" cy="17" rx="33" ry="28" transform="rotate(-25 37 17)" /><path d="M81 -2 C 78 8, 92 18, 104 16 C 114 14, 120 6, 121 -2 Z" /><circle cx="120" cy="23" r="6.3" /><circle cx="41" cy="56" r="3.4" /><circle cx="29.5" cy="72" r="6" /><path d="M516 -2 C 518 8, 540 12, 556 -2 Z" /><circle cx="564" cy="43" r="9.5" /></g><g fill="url(#dg)" fill-opacity="0.6" stroke="#e8e8e8" stroke-width="0.6"><circle cx="565" cy="260" r="4" /><ellipse cx="584" cy="286" rx="14" ry="11.5" transform="rotate(-25 584 286)" /><ellipse cx="553" cy="326" rx="38" ry="24" transform="rotate(-25 553 326)" /><circle cx="506" cy="318" r="3.5" /><circle cx="381" cy="312" r="12.5" /><ellipse cx="436" cy="321" rx="13.5" ry="11.5" /><circle cx="350" cy="314" r="4" /></g>
<g fill="#ffffff" opacity="0.75" filter="url(#bl)">
 <ellipse cx="376" cy="306" rx="5" ry="3.5"/><ellipse cx="431" cy="316" rx="5" ry="3"/><ellipse cx="578" cy="282" rx="5" ry="3"/>
 <ellipse cx="535" cy="322" rx="11" ry="7" transform="rotate(-25 535 322)"/>
</g>
<g fill="none" stroke="#fafafa" stroke-width="1.2" opacity="0.9">
 <path d="M369 318 A12.5 12.5 0 0 0 393 314"/><path d="M424 327 A13.5 11.5 0 0 0 449 323"/><path d="M574 294 A14 11.5 0 0 0 596 282"/>

</g>
 </svg>
</div>
<div class="t" style="left:364px;top:299px;font-size:19.6px;color:#262626;letter-spacing:0px">АДМІНІСТРАТИВНА ВІДПОВІДАЛЬНІСТЬ (КУПАП,</div>
<div class="t" style="left:524px;top:324.5px;font-size:19.6px;color:#262626">СТАТТЯ 173-4)</div>
<!-- table -->
<style>
.tb{position:absolute;font-size:10.25px;line-height:13.5px;color:#222;white-space:nowrap;-webkit-text-stroke:0.2px #222}
.tw{color:#fff;font-weight:bold;font-size:9.85px;-webkit-text-stroke:0}
</style>
<div class="a" style="left:337px;top:361px;width:511px;height:176px;background:#fff"></div>
<div class="a" style="left:337px;top:361px;width:511px;height:16px;background:#2398ec"></div>
<div class="a" style="left:337px;top:378px;width:170px;height:159px;background:#2398ec"></div>
<div class="a" style="left:337px;top:377px;width:170px;height:1.5px;background:#cfe3f7"></div>
<div class="a" style="left:337px;top:405px;width:170px;height:1.5px;background:#cfe3f7"></div>
<div class="a" style="left:337px;top:447px;width:170px;height:1.5px;background:#cfe3f7"></div>
<div class="a" style="left:337px;top:481px;width:170px;height:1.5px;background:#cfe3f7"></div>
<div class="a" style="left:507px;top:378.5px;width:341px;height:27px;background:#cde0f6"></div>
<div class="a" style="left:507px;top:406.5px;width:341px;height:41px;background:#e5edf8"></div>
<div class="a" style="left:507px;top:448.5px;width:341px;height:33px;background:#cde0f6"></div>
<div class="a" style="left:507px;top:482.5px;width:341px;height:54.5px;background:#e5edf8"></div>
<div class="a" style="left:677px;top:378px;width:1px;height:159px;background:#f4f8fd"></div>
<div class="a" style="left:506.5px;top:361px;width:1px;height:16px;background:#8cc4f2"></div>
<div class="a" style="left:677px;top:361px;width:1px;height:16px;background:#8cc4f2"></div>
<div class="tb tw" style="left:337.5px;top:362px">Суб'єкт Відповідальності</div>
<div class="tb tw" style="left:508px;top:362px">Умови</div>
<div class="tb tw" style="left:678.5px;top:362px">Відповідальність (Санкції)</div>
<div class="tb tw" style="left:337.5px;top:380px">Особа, що вчинила булінг (від 16<br>років)</div>
<div class="tb tw" style="left:337.5px;top:408px">Батьки (або особи, що їх<br>замінюють)</div>
<div class="tb tw" style="left:337.5px;top:449px">Повторне вчинення</div>
<div class="tb tw" style="left:337.5px;top:483px">Неповідомлення керівником</div>
<div class="tb" style="left:508px;top:380px">Вчинення булінгу вперше<br>протягом року.</div>
<div class="tb" style="left:508px;top:408px">Якщо булінг вчинено особою<br>віком до 16 років.</div>
<div class="tb" style="left:508px;top:449px">Вчинення булінгу повторно<br>протягом року або групою осіб.</div>
<div class="tb" style="left:508px;top:483px">Неповідомлення керівником<br>закладу освіти уповноваженим<br>органам (Національна поліція) про<br>випадок булінгу.</div>
<div class="tb" style="left:678.5px;top:380px">Штраф або громадські роботи.</div>
<div class="tb" style="left:678.5px;top:408px">Штраф (накладається на батьків)<br>або громадські роботи<br>(виконуються батьками).</div>
<div class="tb" style="left:678.5px;top:449px">Більш високий штраф або<br>громадські роботи.</div>
<div class="tb" style="left:678.5px;top:483px">Штраф (накладається на<br>керівника).</div>

<style>
.tile{position:absolute;width:96.5px;height:71px;border-radius:4px;background:linear-gradient(160deg,#2d2a2a 0%,#262626 55%,#2a2828 100%);border:1px solid #2f2f2f}
.av{position:absolute;border-radius:50%;overflow:hidden}

.mute{position:absolute;width:22px;height:19px;border-radius:3px;background:#1b1b1b}
.mute svg{left:5px;top:3px}
</style>
<!-- row1 -->
<div class="tile" style="left:1080.5px;top:136.7px;border:2px solid #7f85f5;border-radius:5px;background:#282525"></div>
<div class="tile" style="left:1180px;top:136.7px;background:linear-gradient(160deg,#1f2a28 0%,#262626 60%,#2c2625 100%)"></div>
<div class="mute" style="left:1183.6px;top:184.5px"><svg width="12" height="13" viewBox="0 0 12 13"><rect x="4" y="1" width="4" height="7" rx="2" fill="#e0e0e0"/><path d="M2 6a4 4 0 0 0 8 0M6 10v2.5" fill="none" stroke="#e0e0e0" stroke-width="0.9"/><path d="M1 1l10 11" stroke="#1b1b1b" stroke-width="2"/><path d="M1 1l10 11" stroke="#e0e0e0" stroke-width="0.9"/></svg></div>
<!-- row2 -->
<div class="tile" style="left:1080.5px;top:211.45px;background:linear-gradient(160deg,#2a2a2a 0%,#303030 40%,#262626 100%)"></div>
<div class="mute" style="left:1084px;top:258.5px"><svg width="12" height="13" viewBox="0 0 12 13"><rect x="4" y="1" width="4" height="7" rx="2" fill="#e0e0e0"/><path d="M2 6a4 4 0 0 0 8 0M6 10v2.5" fill="none" stroke="#e0e0e0" stroke-width="0.9"/><path d="M1 1l10 11" stroke="#1b1b1b" stroke-width="2"/><path d="M1 1l10 11" stroke="#e0e0e0" stroke-width="0.9"/></svg></div>
<div class="tile" style="left:1180px;top:211.45px;background:linear-gradient(160deg,#262222 0%,#282626 60%,#2a2727 100%)"></div>
<div class="mute" style="left:1183.6px;top:258.5px"><svg width="12" height="13" viewBox="0 0 12 13"><rect x="4" y="1" width="4" height="7" rx="2" fill="#e0e0e0"/><path d="M2 6a4 4 0 0 0 8 0M6 10v2.5" fill="none" stroke="#e0e0e0" stroke-width="0.9"/><path d="M1 1l10 11" stroke="#1b1b1b" stroke-width="2"/><path d="M1 1l10 11" stroke="#e0e0e0" stroke-width="0.9"/></svg></div>
<!-- row3 -->
<div class="tile" style="left:1080.5px;top:286.2px;background:linear-gradient(160deg,#262626 0%,#252828 60%,#1f2a28 100%)"></div>
<div class="mute" style="left:1084px;top:333px"><svg width="12" height="13" viewBox="0 0 12 13"><rect x="4" y="1" width="4" height="7" rx="2" fill="#e0e0e0"/><path d="M2 6a4 4 0 0 0 8 0M6 10v2.5" fill="none" stroke="#e0e0e0" stroke-width="0.9"/><path d="M1 1l10 11" stroke="#1b1b1b" stroke-width="2"/><path d="M1 1l10 11" stroke="#e0e0e0" stroke-width="0.9"/></svg></div>
<div class="tile" style="left:1180px;top:286.2px;background:linear-gradient(160deg,#2a2626 0%,#282828 60%,#262626 100%)"></div>

<div class="mute" style="left:1183.6px;top:333px"><svg width="12" height="13" viewBox="0 0 12 13"><rect x="4" y="1" width="4" height="7" rx="2" fill="#e0e0e0"/><path d="M2 6a4 4 0 0 0 8 0M6 10v2.5" fill="none" stroke="#e0e0e0" stroke-width="0.9"/><path d="M1 1l10 11" stroke="#1b1b1b" stroke-width="2"/><path d="M1 1l10 11" stroke="#e0e0e0" stroke-width="0.9"/></svg></div>
<!-- row4 -->
<div class="tile" style="left:1080.5px;top:360.95px;background:linear-gradient(160deg,#2c2626 0%,#292828 60%,#252828 100%)"></div>
<div class="mute" style="left:1084px;top:408px"><svg width="12" height="13" viewBox="0 0 12 13"><rect x="4" y="1" width="4" height="7" rx="2" fill="#e0e0e0"/><path d="M2 6a4 4 0 0 0 8 0M6 10v2.5" fill="none" stroke="#e0e0e0" stroke-width="0.9"/><path d="M1 1l10 11" stroke="#1b1b1b" stroke-width="2"/><path d="M1 1l10 11" stroke="#e0e0e0" stroke-width="0.9"/></svg></div>
<div class="tile" style="left:1180px;top:360.95px;background:linear-gradient(160deg,#262626 0%,#262a2a 60%,#222a2a 100%)"></div>
<div class="mute" style="left:1183.6px;top:408px"><svg width="12" height="13" viewBox="0 0 12 13"><rect x="4" y="1" width="4" height="7" rx="2" fill="#e0e0e0"/><path d="M2 6a4 4 0 0 0 8 0M6 10v2.5" fill="none" stroke="#e0e0e0" stroke-width="0.9"/><path d="M1 1l10 11" stroke="#1b1b1b" stroke-width="2"/><path d="M1 1l10 11" stroke="#e0e0e0" stroke-width="0.9"/></svg></div>
<!-- row5 -->
<div class="tile" style="left:1130.5px;top:435.7px;background:linear-gradient(160deg,#2a2828 0%,#262a2a 60%,#1f2a2a 100%)"></div>
<div class="mute" style="left:1134px;top:484.5px"><svg width="12" height="13" viewBox="0 0 12 13"><rect x="4" y="1" width="4" height="7" rx="2" fill="#e0e0e0"/><path d="M2 6a4 4 0 0 0 8 0M6 10v2.5" fill="none" stroke="#e0e0e0" stroke-width="0.9"/><path d="M1 1l10 11" stroke="#1b1b1b" stroke-width="2"/><path d="M1 1l10 11" stroke="#e0e0e0" stroke-width="0.9"/></svg></div>
<!-- big tile -->
<div class="tile" style="left:1080px;top:510.45px;width:196.5px;height:110px;background:linear-gradient(170deg,#2c2828 0%,#2a2727 50%,#2e2a26 100%)"></div>
<div class="mute" style="left:1086.5px;top:593.5px;width:23px;height:20.5px"><svg style="left:5.5px;top:3.5px" width="12" height="13" viewBox="0 0 12 13"><rect x="4" y="1" width="4" height="7" rx="2" fill="#e0e0e0"/><path d="M2 6a4 4 0 0 0 8 0M6 10v2.5" fill="none" stroke="#e0e0e0" stroke-width="0.9"/><path d="M1 1l10 11" stroke="#1b1b1b" stroke-width="2"/><path d="M1 1l10 11" stroke="#e0e0e0" stroke-width="0.9"/></svg></div>
<svg style="left:1108.25px;top:151.5px" width="41.0" height="41.0" viewBox="0 0 40 40"><defs><clipPath id="c1"><circle cx="20" cy="20" r="20"/></clipPath><filter id="f1" x="-20%" y="-20%" width="140%" height="140%"><feGaussianBlur stdDeviation="0.9"/></filter></defs><g clip-path="url(#c1)"><g filter="url(#f1)"><rect x="-5" y="-5" width="50" height="50" fill="#3a3230"/><rect x="-5" y="-5" width="22" height="20" fill="#b8c4a8"/><rect x="0" y="2" width="8" height="12" fill="#e4ecd8"/><rect x="17" y="-5" width="30" height="26" fill="#c8b890"/><rect x="24" y="0" width="6" height="22" fill="#e0d4b0"/><rect x="-5" y="14" width="18" height="12" fill="#5a4038"/><ellipse cx="19" cy="11" rx="4.5" ry="6" fill="#6a4030"/><ellipse cx="19" cy="12" rx="3" ry="4" fill="#b08070"/><path d="M10 30 Q12 16 19 17 Q27 16 30 30Z" fill="#1c2440"/><rect x="-5" y="28" width="50" height="20" fill="#17907f"/><rect x="10" y="24" width="7" height="9" fill="#f0eaa0"/><rect x="22" y="25" width="6" height="4" fill="#e8e4d8"/></g></g></svg>
<svg style="left:1208.25px;top:151.5px" width="41.0" height="41.0" viewBox="0 0 40 40"><defs><clipPath id="c2"><circle cx="20" cy="20" r="20"/></clipPath><filter id="f2" x="-20%" y="-20%" width="140%" height="140%"><feGaussianBlur stdDeviation="0.9"/></filter></defs><g clip-path="url(#c2)"><g filter="url(#f2)"><rect x="-5" y="-5" width="50" height="50" fill="#d8d6d0"/><rect x="-5" y="-5" width="50" height="12" fill="#eeeeee"/><path d="M-5 4 Q14 6 22 45 L-5 45Z" fill="#4c9a2a"/><path d="M-2 16 Q10 18 16 45 L-5 45Z" fill="#72c040"/><circle cx="6" cy="30" r="5" fill="#8ad050"/><ellipse cx="24" cy="13" rx="9" ry="11" fill="#e8dcc0"/><ellipse cx="23" cy="12" rx="5" ry="6" fill="#f0dcc8"/><path d="M18 40 Q22 24 34 24 L45 30 L45 45Z" fill="#7088c0"/><path d="M26 30 L40 26 L38 40Z" fill="#a8b8d8"/></g></g></svg>
<svg style="left:1108.25px;top:226.0px" width="41.0" height="41.0" viewBox="0 0 40 40"><defs><clipPath id="c3"><circle cx="20" cy="20" r="20"/></clipPath><filter id="f3" x="-20%" y="-20%" width="140%" height="140%"><feGaussianBlur stdDeviation="0.9"/></filter></defs><g clip-path="url(#c3)"><g filter="url(#f3)"><rect x="-5" y="-5" width="50" height="50" fill="#9a9a9a"/><rect x="20" y="3" width="14" height="18" fill="#f2f2f2"/><rect x="22" y="5" width="4" height="10" fill="#333"/><rect x="28" y="5" width="4" height="10" fill="#444"/><rect x="24" y="20" width="16" height="14" fill="#d0d0d0"/><rect x="30" y="22" width="10" height="8" fill="#222"/><ellipse cx="12" cy="10" rx="8" ry="7" fill="#2a2a2a"/><path d="M2 16 Q10 14 16 24 L20 40 L5 42Z" fill="#eeeeee"/><path d="M12 18 L20 20 L22 36 L14 34Z" fill="#1a1a1a"/><ellipse cx="14" cy="36" rx="10" ry="5" fill="#dadada"/></g></g></svg>
<svg style="left:1208.25px;top:226.0px" width="41.0" height="41.0" viewBox="0 0 40 40"><defs><clipPath id="c4"><circle cx="20" cy="20" r="20"/></clipPath><filter id="f4" x="-20%" y="-20%" width="140%" height="140%"><feGaussianBlur stdDeviation="0.9"/></filter></defs><g clip-path="url(#c4)"><g filter="url(#f4)"><rect x="-5" y="-5" width="50" height="50" fill="#8a9080"/><rect x="28" y="-5" width="20" height="50" fill="#6a8880"/><rect x="35" y="5" width="10" height="25" fill="#c06040"/><ellipse cx="18" cy="20" rx="15" ry="18" fill="#c8a878"/><ellipse cx="19" cy="17" rx="8" ry="10" fill="#f0d8c8"/><path d="M4 45 Q8 32 19 32 Q30 32 34 45Z" fill="#1a2a28"/></g></g></svg>
<svg style="left:1108.25px;top:300.5px" width="41.0" height="41.0" viewBox="0 0 40 40"><defs><clipPath id="c5"><circle cx="20" cy="20" r="20"/></clipPath><filter id="f5" x="-20%" y="-20%" width="140%" height="140%"><feGaussianBlur stdDeviation="0.9"/></filter></defs><g clip-path="url(#c5)"><g filter="url(#f5)"><rect x="-5" y="-5" width="50" height="50" fill="#121010"/><ellipse cx="20" cy="30" rx="18" ry="10" fill="#221a1a"/><g fill="#8a6a60" opacity="0.8"><circle cx="8" cy="26" r="1.2"/><circle cx="14" cy="30" r="1"/><circle cx="20" cy="25" r="1.2"/><circle cx="27" cy="31" r="1.1"/><circle cx="33" cy="26" r="1.2"/><circle cx="11" cy="35" r="1"/><circle cx="24" cy="36" r="1.2"/><circle cx="30" cy="21" r="0.9"/><circle cx="17" cy="19" r="0.9"/><circle cx="36" cy="33" r="1"/></g></g></g></svg>
<div class="a" style="left:1208.25px;top:300.5px;width:41px;height:41px;border-radius:50%;background:#e4e0f2"></div>
<svg style="left:1108.25px;top:375.5px" width="41.0" height="41.0" viewBox="0 0 40 40"><defs><clipPath id="c7"><circle cx="20" cy="20" r="20"/></clipPath><filter id="f7" x="-20%" y="-20%" width="140%" height="140%"><feGaussianBlur stdDeviation="0.9"/></filter></defs><g clip-path="url(#c7)"><g filter="url(#f7)"><rect x="-5" y="-5" width="50" height="50" fill="#5c8a50"/><rect x="-5" y="-5" width="50" height="20" fill="#3a8ae8"/><rect x="-5" y="12" width="50" height="6" fill="#9ab8c8"/><rect x="-5" y="18" width="50" height="30" fill="#4a6a3a"/><rect x="3" y="10" width="4" height="30" fill="#e0e0e0"/><ellipse cx="23" cy="10" rx="5" ry="6" fill="#c09070"/><path d="M16 18 Q23 14 30 18 L30 30 L16 30Z" fill="#d0a080"/><rect x="19" y="22" width="12" height="8" fill="#111"/><rect x="16" y="30" width="16" height="14" fill="#20283a"/></g></g></svg>
<svg style="left:1208.25px;top:375.5px" width="41.0" height="41.0" viewBox="0 0 40 40"><defs><clipPath id="c8"><circle cx="20" cy="20" r="20"/></clipPath><filter id="f8" x="-20%" y="-20%" width="140%" height="140%"><feGaussianBlur stdDeviation="0.9"/></filter></defs><g clip-path="url(#c8)"><g filter="url(#f8)"><rect x="-5" y="-5" width="50" height="50" fill="#f0eeec"/><rect x="-5" y="-5" width="50" height="10" fill="#b06040"/><rect x="30" y="5" width="12" height="30" fill="#c8c8c8"/><rect x="-2" y="6" width="8" height="20" fill="#8a5a40"/><ellipse cx="20" cy="14" rx="8" ry="11" fill="#3a2018"/><ellipse cx="20" cy="13" rx="4.5" ry="6" fill="#e0b090"/><path d="M6 45 Q8 24 20 24 Q32 24 34 45Z" fill="#a85a30"/><circle cx="20" cy="20" r="19.5" fill="none" stroke="#b07060" stroke-width="1"/></g></g></svg>
<svg style="left:1159px;top:452px" width="40" height="40" viewBox="0 0 40 40"><defs><clipPath id="c9"><circle cx="20" cy="20" r="20"/></clipPath><filter id="f9" x="-20%" y="-20%" width="140%" height="140%"><feGaussianBlur stdDeviation="0.9"/></filter></defs><g clip-path="url(#c9)"><g filter="url(#f9)"><rect x="-5" y="-5" width="50" height="50" fill="#707060"/><rect x="-5" y="-5" width="14" height="50" fill="#8a8a80"/><ellipse cx="18" cy="15" rx="12" ry="13" fill="#c8a070"/><ellipse cx="28" cy="12" rx="8" ry="10" fill="#3a2a20"/><ellipse cx="18" cy="17" rx="6" ry="8" fill="#f0c0a8"/><path d="M2 45 Q8 28 22 28 Q34 26 42 20 L45 45Z" fill="#e06a88"/><path d="M8 36 Q18 32 26 40 L8 45Z" fill="#f0a0b0"/></g></g></svg>
<svg style="left:1152.5px;top:538.5px" width="53.0" height="53.0" viewBox="0 0 40 40"><defs><clipPath id="c10"><circle cx="20" cy="20" r="20"/></clipPath><filter id="f10" x="-20%" y="-20%" width="140%" height="140%"><feGaussianBlur stdDeviation="0.9"/></filter></defs><g clip-path="url(#c10)"><g filter="url(#f10)"><rect x="-5" y="-5" width="50" height="50" fill="#6a8aa0"/><rect x="-5" y="-5" width="50" height="22" fill="#a8c8e8"/><ellipse cx="14" cy="6" rx="10" ry="4" fill="#e8eef6"/><ellipse cx="30" cy="3" rx="8" ry="3" fill="#d8e4f0"/><rect x="-5" y="17" width="50" height="14" fill="#8aa0b0"/><rect x="-5" y="31" width="50" height="15" fill="#607880"/><path d="M28 26 L45 22 L45 36 L30 34Z" fill="#2a3438"/><ellipse cx="22" cy="12" rx="4.5" ry="5.5" fill="#6a5040"/><ellipse cx="20" cy="13" rx="3" ry="4" fill="#e0c0b0"/><path d="M13 20 Q21 16 28 20 L29 33 L14 34Z" fill="#f4f4f4"/><path d="M10 18 L15 22 L14 27 L9 23Z" fill="#f0f0f0"/><rect x="16" y="33" width="12" height="10" fill="#1a1a1a"/></g></g></svg>
<div class="t" style="left:1218px;top:315px;font-size:14.5px;color:#2e2e3a;letter-spacing:0.3px">БП</div>
<!-- name label -->
<div class="a" style="left:10.5px;top:650px;width:154px;height:19px;border-radius:3px 0 0 3px;background:#121212"></div>
<div class="t" style="left:15px;top:655px;font-size:9.8px;color:#e6e6e6">Балакірєва Вікторія Анатоліївна</div>

<div class="a" style="left:0;top:679px;width:1280px;height:40px;background:linear-gradient(90deg,#211a2e 0%,#271a2b 25%,#2f1a26 45%,#38191f 65%,#3b1918 85%,#3a1916 100%)"></div>
<div class="a" style="left:0;top:679px;width:1280px;height:1px;background:rgba(255,255,255,0.05)"></div>
<!-- weather -->
<svg style="left:17px;top:689px" width="21" height="21" viewBox="0 0 21 21"><defs><linearGradient id="sun" x1="0" y1="0" x2="0" y2="1"><stop offset="0" stop-color="#fbb03b"/><stop offset="1" stop-color="#f37b21"/></linearGradient></defs><circle cx="9" cy="9" r="8" fill="url(#sun)"/><path d="M5 19.5h12a3.5 3.5 0 0 0 0-7 4.5 4.5 0 0 0-8.5-1A3.8 3.8 0 0 0 5 19.5Z" fill="#cfdaf0" stroke="#e8eefa" stroke-width="0.6"/></svg>
<div class="t" style="left:43px;top:688px;font-size:10px;color:#f2f2f2">7°C</div>
<div class="t" style="left:42.5px;top:701px;font-size:10px;color:#dcdcdc">Partly sunny</div>
<!-- start -->
<svg style="left:501px;top:690px" width="20" height="20" viewBox="0 0 20 20"><defs><linearGradient id="win" x1="0" y1="0" x2="1" y2="1"><stop offset="0" stop-color="#4cc2ff"/><stop offset="1" stop-color="#0a7fd8"/></linearGradient></defs><rect x="0" y="0" width="9.5" height="9.5" rx="0.8" fill="url(#win)"/><rect x="10.5" y="0" width="9.5" height="9.5" rx="0.8" fill="url(#win)"/><rect x="0" y="10.5" width="9.5" height="9.5" rx="0.8" fill="url(#win)"/><rect x="10.5" y="10.5" width="9.5" height="9.5" rx="0.8" fill="url(#win)"/></svg>
<svg style="left:540px;top:690px" width="19" height="20" viewBox="0 0 19 20"><circle cx="8" cy="8" r="6.5" fill="none" stroke="#f0f0f0" stroke-width="2.2"/><path d="M12.8 13l5 5.5" stroke="#f0f0f0" stroke-width="2.4" stroke-linecap="round"/></svg>
<svg style="left:575px;top:690px" width="21" height="20" viewBox="0 0 21 20"><rect x="0" y="6" width="14" height="14" rx="1" fill="#7a7a7a"/><rect x="6" y="0" width="15" height="13" rx="1" fill="#f0f0f0"/><rect x="6" y="6" width="8" height="7" fill="#b8b8b8"/></svg>
<svg style="left:612px;top:690px" width="21" height="20" viewBox="0 0 21 20"><path d="M0 2a1.5 1.5 0 0 1 1.5-1.5h6l2 2.5h10a1.5 1.5 0 0 1 1.5 1.5V18a1.5 1.5 0 0 1-1.5 1.5h-18A1.5 1.5 0 0 1 0 18Z" fill="#e8a81a"/><path d="M0 6h21v12a1.5 1.5 0 0 1-1.5 1.5h-18A1.5 1.5 0 0 1 0 18Z" fill="#ffd04a"/><rect x="4" y="14" width="13" height="4" fill="#1a78c8"/></svg>
<svg style="left:648px;top:689px" width="21" height="21" viewBox="0 0 21 21"><circle cx="10.5" cy="10.5" r="10" fill="#e94235"/><path d="M10.5 10.5L1.8 5.5A10 10 0 0 0 5.5 19.2Z" fill="#34a853"/><path d="M10.5 10.5L5.5 19.2A10 10 0 0 0 20.5 10.5Z" fill="#fbbc04"/><path d="M10.5 10.5L20.5 10.5A10 10 0 0 0 19.2 5.5Z" fill="#e94235"/><circle cx="10.5" cy="10.5" r="4.6" fill="#fff"/><circle cx="10.5" cy="10.5" r="3.6" fill="#1a73e8"/></svg>
<div class="a" style="left:655px;top:713px;width:7px;height:2px;border-radius:1px;background:#b0a8ac"></div>
<svg style="left:686px;top:689px" width="25" height="22" viewBox="0 0 25 22"><circle cx="10" cy="12" r="10" fill="#2aa3e0"/><path d="M4.5 11.5l10-4c.5-.2.9.1.8.7l-1.7 8c-.1.5-.6.7-1 .4l-2.8-2-1.4 1.3c-.2.2-.5.1-.5-.2l.1-2 5-4.5-6.2 3.8-2.6-.8c-.5-.2-.5-.6.3-.7Z" fill="#fff"/><rect x="12" y="0" width="13" height="9" rx="2" fill="#e5393b"/><text x="18.5" y="7.3" font-size="7" fill="#fff" text-anchor="middle" font-family="Liberation Sans">28</text></svg>
<div class="a" style="left:694px;top:713px;width:7px;height:2px;border-radius:1px;background:#b0a8ac"></div>
<svg style="left:721px;top:690px" width="22" height="20" viewBox="0 0 22 20"><rect x="0" y="0" width="22" height="20" fill="#d21e1e"/><path d="M13 1l8 17M21 1l-8 17" stroke="#fff" stroke-width="1.6"/><text x="3" y="11" font-size="5" fill="#fff" font-family="Liberation Sans">PDF</text><rect x="2" y="15" width="10" height="1.5" fill="#f5a0a0"/></svg>
<div class="a" style="left:729px;top:713px;width:7px;height:2px;border-radius:1px;background:#b0a8ac"></div>
<div class="a" style="left:753px;top:683px;width:33px;height:33px;border-radius:4px;background:rgba(255,255,255,0.07)"></div>
<svg style="left:757px;top:686px" width="27" height="25" viewBox="0 0 27 25"><circle cx="8.5" cy="5.5" r="3" fill="#7b83eb"/><circle cx="16.5" cy="7" r="2.3" fill="#5b5fc7"/><rect x="13" y="10.5" width="8" height="11" rx="2.5" fill="#5b5fc7"/><rect x="5" y="10" width="11" height="13" rx="3" fill="#7b83eb"/><rect x="1" y="9" width="9" height="9" rx="1" fill="#4b53bc"/><path d="M3.5 11.5h4M5.5 11.5v5" stroke="#fff" stroke-width="1.2"/><circle cx="20.5" cy="5.5" r="5" fill="#e8393e"/></svg>
<div class="a" style="left:762.5px;top:713px;width:13px;height:2.5px;border-radius:1.5px;background:#d9a7f0"></div>
<!-- tray -->
<svg style="left:1062px;top:696px" width="11" height="6" viewBox="0 0 11 6"><path d="M1 5.3L5.5 1L10 5.3" fill="none" stroke="#f0f0f0" stroke-width="1.4"/></svg>
<div class="a" style="left:1080px;top:683px;width:27px;height:32.5px;border-radius:4px;background:rgba(255,255,255,0.06)"></div>
<svg style="left:1087px;top:692px" width="13" height="14" viewBox="0 0 13 14"><rect x="4.3" y="1" width="4.4" height="7.5" rx="2.2" fill="#f0f0f0"/><path d="M2.2 6.5a4.3 4.3 0 0 0 8.6 0M6.5 11v2.5" fill="none" stroke="#f0f0f0" stroke-width="1"/><path d="M1 1l11 12" stroke="#3a1919" stroke-width="2.2"/><path d="M1 1l11 12" stroke="#f0f0f0" stroke-width="1.1"/></svg>
<div class="t" style="left:1116.5px;top:695px;font-size:10px;color:#f0f0f0;letter-spacing:-0.8px">РУС</div>
<svg style="left:1150px;top:693px" width="14" height="12" viewBox="0 0 14 12"><path d="M1 4.5a8.5 8.5 0 0 1 12 0M3 6.7a5.6 5.6 0 0 1 8 0M5 8.8a2.8 2.8 0 0 1 4 0" fill="none" stroke="#f0f0f0" stroke-width="1.2"/><circle cx="7" cy="10.8" r="1" fill="#f0f0f0"/></svg>
<svg style="left:1169px;top:692px" width="15" height="13" viewBox="0 0 15 13"><path d="M1 4.5h2.5L7 1.2v10.6L3.5 8.5H1Z" fill="none" stroke="#f0f0f0" stroke-width="1.1" stroke-linejoin="round"/><path d="M9 4.5a2.5 2.5 0 0 1 0 4M10.8 2.5a5.2 5.2 0 0 1 0 8M12.6 0.8a7.6 7.6 0 0 1 0 11.4" fill="none" stroke="#f0f0f0" stroke-width="1.1"/></svg>
<svg style="left:1190px;top:694px" width="14" height="9" viewBox="0 0 14 9"><rect x="0.6" y="0.6" width="11" height="7.8" rx="1.5" fill="none" stroke="#f0f0f0" stroke-width="1.1"/><rect x="2.2" y="2.2" width="7.5" height="4.6" rx="0.5" fill="#f0f0f0"/><rect x="12.3" y="3" width="1.4" height="3" rx="0.5" fill="#f0f0f0"/></svg>
<div class="t" style="left:1241px;top:688px;font-size:9.6px;color:#f0f0f0">13:26</div>
<div class="t" style="left:1217px;top:700.5px;font-size:9.6px;color:#f0f0f0">26.02.2026</div>

</body></html>
